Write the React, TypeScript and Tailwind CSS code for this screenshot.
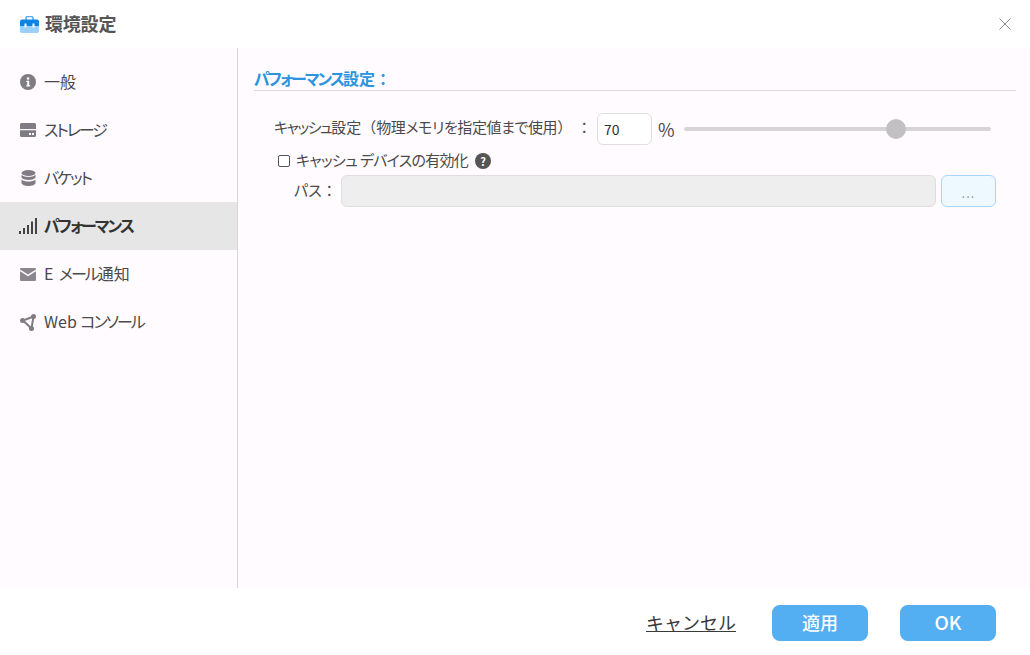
import React from 'react';

const font = '[font-family:"Noto_Sans_CJK_JP","Liberation_Sans",sans-serif] [font-feature-settings:"palt"]';
const fullWidth = '[font-feature-settings:normal]';

function InfoIcon() {
  return (
    <svg width="16" height="16" viewBox="0 0 16 16">
      <circle cx="8" cy="8" r="8" fill="#807c83" />
      <rect x="6.9" y="3.4" width="2.3" height="2.2" fill="#fff" />
      <path d="M6.2 6.8h3v4.4h1v1.3H6.2v-1.3h1V8.1h-1z" fill="#fff" />
    </svg>
  );
}

function StorageIcon() {
  return (
    <svg width="16" height="14" viewBox="0 0 16 14">
      <path d="M1.5 0h13A1.5 1.5 0 0 1 16 1.5V6H0V1.5A1.5 1.5 0 0 1 1.5 0z" fill="#807c83" />
      <path d="M0 7.2h16v5.3a1.5 1.5 0 0 1-1.500 1.500h-13A1.500 1.500 0 0 1 0 12.500z" fill="#807c83" />
      <rect x="9" y="10" width="2" height="2" fill="#fff" />
      <rect x="12" y="10" width="2" height="2" fill="#fff" />
    </svg>
  );
}

function BucketIcon() {
  return (
    <svg width="15" height="16" viewBox="0 0 15 16">
      <ellipse cx="7.500" cy="3" rx="7" ry="3" fill="#807c83" />
      <path d="M.5 4.800C2 6.500 5 7 7.500 7s5.500-.5 7-2.200v2.700C14 9 11 10 7.500 10S1 9 .5 7.500z" fill="#807c83" />
      <path d="M.5 9.500C2 11 5 11.500 7.500 11.500s5.500-.5 7-2V13c-.5 1.800-3.500 3-7 3s-6.500-1.200-7-3z" fill="#807c83" />
    </svg>
  );
}

function SignalIcon() {
  return (
    <svg width="18" height="17" viewBox="0 0 18 17">
      <rect x="0" y="13" width="2" height="3" fill="#444" />
      <rect x="4" y="10" width="2" height="6" fill="#444" />
      <rect x="8" y="7" width="2" height="9" fill="#444" />
      <rect x="12" y="3.500" width="2" height="12.500" fill="#444" />
      <rect x="16" y="0" width="2" height="16" fill="#444" />
    </svg>
  );
}

function MailIcon() {
  return (
    <svg width="16" height="13" viewBox="0 0 16 13">
      <path d="M0 1a1 1 0 0 1 1-1h14a1 1 0 0 1 1 1v.6L8 6.600 0 1.600z" fill="#8b878e" />
      <path d="M0 3.200l8 5 8-5V12a1 1 0 0 1-1 1H1a1 1 0 0 1-1-1z" fill="#8b878e" />
    </svg>
  );
}

function WebIcon() {
  return (
    <svg width="16" height="17" viewBox="0 0 16 17">
      <path d="M3 6.500L13.500 2.500 11.500 14.500z" fill="none" stroke="#807c83" strokeWidth="2" />
      <circle cx="2.500" cy="6.500" r="2.500" fill="#807c83" />
      <circle cx="13.500" cy="2.500" r="2.500" fill="#807c83" />
      <circle cx="11.500" cy="14.500" r="2.500" fill="#807c83" />
    </svg>
  );
}

function Kana({ children }: { children: React.ReactNode }) {
  return <span className="tracking-[-2px]">{children}</span>;
}

const navItems = [
  { key: 'general', label: '一般', icon: <InfoIcon /> },
  { key: 'storage', label: <Kana>ストレージ</Kana>, icon: <StorageIcon /> },
  { key: 'bucket', label: <Kana>バケット</Kana>, icon: <BucketIcon /> },
  { key: 'performance', label: <Kana>パフォーマンス</Kana>, icon: <SignalIcon />, active: true },
  { key: 'mail', label: <>E <span className="ml-[2px] tracking-[-2px]">メール</span>通知</>, icon: <MailIcon /> },
  { key: 'web', label: <>Web <Kana>コンソール</Kana></>, icon: <WebIcon /> },
];

export default function App() {
  return (
    <div className={`flex h-[655px] w-[1030px] flex-col overflow-hidden bg-white text-[#444] ${font}`}>
      {/* Title bar */}
      <header className="flex h-12 shrink-0 items-center justify-between pl-5 pr-[19px]">
        <div className="flex items-center gap-[6px]">
          <svg width="19" height="17" viewBox="0 0 19 17">
            <path d="M6 4V2.200A1.700 1.700 0 0 1 7.700.5h3.600A1.700 1.700 0 0 1 13 2.200V4" fill="none" stroke="#5aa9ea" strokeWidth="1.500" />
            <path d="M0 9h19v6a2 2 0 0 1-2 2H2a2 2 0 0 1-2-2z" fill="#9ad0fb" />
            <path d="M2 3.500h15a2 2 0 0 1 2 2V10H0V5.500a2 2 0 0 1 2-2z" fill="#0c84e4" />
            <rect x="4.500" y="7.500" width="2" height="4" fill="#fff" />
            <rect x="12.500" y="7.500" width="2" height="4" fill="#fff" />
          </svg>
          <span className="pb-[3px] text-[18px] leading-none font-bold tracking-[-0.200px] text-[#555]">環境設定</span>
        </div>
        <svg width="12" height="12" viewBox="0 0 12 12">
          <path d="M.5.5l11 11M11.500.5l-11 11" stroke="#8a8a8a" strokeWidth="1" />
        </svg>
      </header>

      {/* Body */}
      <div className="flex min-h-0 flex-1 bg-[#fffbff]">
        <nav className="w-[238px] shrink-0 border-r border-[#d9d6da] pt-[10px]">
          {navItems.map((item) => (
            <div
              key={item.key}
              className={`flex h-12 items-center text-[16px] ${item.active ? 'bg-[#e6e6e6] pl-[19px] font-bold text-[#333]' : 'pl-5 text-[#4a4a4a]'}`}
            >
              <span className={`flex items-center justify-center ${item.active ? 'mr-[7px] w-[18px]' : 'mr-2 w-4'}`}>{item.icon}</span>
              <span className="pb-[2px] whitespace-nowrap">{item.label}</span>
            </div>
          ))}
        </nav>

        <main className="min-w-0 flex-1 pt-[19px] pl-4 pr-[14px]">
          <h2 className="h-[24px] border-b border-[#ddd8e0] text-[16px] leading-[22px] font-bold text-[#2b93e0]">
            <Kana>パフォーマンス</Kana>設定<span className={fullWidth}>：</span>
          </h2>

          <div className="mt-[22px] flex h-8 items-center pl-5 text-[15px] text-[#4a4a4a]">
            <span className="w-[323px] pb-[3px] whitespace-nowrap">
              <span className="tracking-[-1.500px]">キャッシュ</span>設定
              <span className={fullWidth}>（</span>
              <span className="tracking-[-0.400px]">物理メモリを指定値まで使用</span>
              <span className={fullWidth}>）</span>
              <span className={`ml-3 ${fullWidth}`}>：</span>
            </span>
            <input
              readOnly
              value="70"
              className="h-8 w-[55px] rounded-md border border-[#e0dfe0] bg-white pl-[6px] text-[14px] text-[#333] outline-none"
            />
            <span className="ml-[6px] w-[26px] text-[18px] leading-none">%</span>
            <div className="relative h-1 w-[307px] rounded-full bg-[#d6d4d6]">
              <div className="absolute top-[-8px] left-[202px] h-5 w-5 rounded-full bg-[#c2c0c3]" />
            </div>
          </div>

          <div className="mt-1 flex h-6 items-center pl-6 text-[15px] text-[#4a4a4a]">
            <span className="mr-[6px] h-3 w-3 rounded-[2px] border border-[#555] bg-white" />
            <span className="pb-[2px] tracking-[-0.700px] whitespace-nowrap">キャッシュ デバイスの有効化</span>
            <span className="ml-[7px] flex h-4 w-4 items-center justify-center rounded-full bg-[#555] text-[11px] leading-none font-bold text-white">?</span>
          </div>

          <div className="mt-[2px] flex h-8 items-center pl-10 text-[15px] text-[#4a4a4a]">
            <span className="w-[47px] pb-[2px]">
              パス<span className={fullWidth}>：</span>
            </span>
            <div className="h-8 w-[595px] rounded-md border border-[#dedede] bg-[#eeeeee]" />
            <div className="ml-[5px] flex h-8 w-[55px] items-center justify-center rounded-md border border-[#a9d6f8] bg-[#eef8ff] pt-[3px] text-[13px] tracking-[1px] text-[#999]">...</div>
          </div>
        </main>
      </div>

      {/* Footer */}
      <footer className="flex h-[67px] shrink-0 items-center justify-end pt-[2px] pr-[34px]">
        <span className={`mr-9 text-[18px] text-[#3a3a3a] underline ${fullWidth}`}>キャンセル</span>
        <button className="mr-8 h-9 w-24 rounded-lg bg-[#53aef2] text-[18px] font-medium text-white">適用</button>
        <button className="h-9 w-24 rounded-lg bg-[#53aef2] text-[19px] font-medium text-white">OK</button>
      </footer>
    </div>
  );
}
